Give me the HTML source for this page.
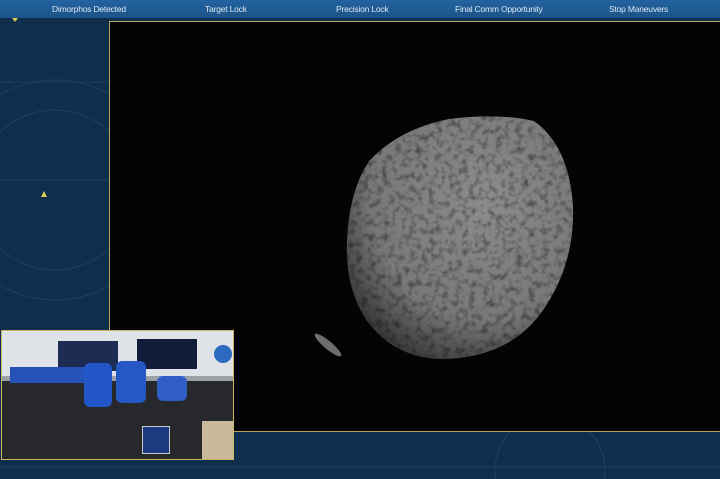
<!DOCTYPE html>
<html><head><style>
*{margin:0;padding:0;box-sizing:border-box}
html,body{width:720px;height:479px;overflow:hidden}
body{background:#0f2e4e;font-family:"Liberation Sans",sans-serif;position:relative}
.top{position:absolute;left:0;top:0;width:720px;height:18px;background:linear-gradient(#2363a0,#1b5388);color:#dfe8f2;font-size:8.5px}
.top span{position:absolute;top:4px;letter-spacing:-0.2px}
.frame{position:absolute;left:109px;top:21px;width:611px;height:411px;border:1.5px solid #b8a45a;border-right:none;background:#040404;overflow:hidden}
.inset{position:absolute;left:1px;top:330px;width:233px;height:130px;border:1.5px solid #c9b766;background:#9aa0a8;overflow:hidden}
.tri{position:absolute;width:0;height:0}
</style></head><body>
<div class="top">
<span style="left:52px">Dimorphos Detected</span>
<span style="left:205px">Target Lock</span>
<span style="left:336px">Precision Lock</span>
<span style="left:455px">Final Comm Opportunity</span>
<span style="left:609px">Stop Maneuvers</span>
</div>
<svg style="position:absolute;left:0;top:0" width="720" height="479">
<g fill="none" stroke="#1d3f62" stroke-width="1">
<circle cx="55" cy="190" r="110"/><circle cx="55" cy="190" r="80"/>
<circle cx="550" cy="470" r="55"/>
</g>
<line x1="0" y1="82" x2="109" y2="82" stroke="#1d3f62"/>
<line x1="0" y1="180" x2="109" y2="180" stroke="#1d3f62"/>
<line x1="0" y1="467" x2="720" y2="467" stroke="#1f4062"/>
</svg>
<div class="tri" style="left:12px;top:18px;border-left:3px solid transparent;border-right:3px solid transparent;border-top:4px solid #d8cc55"></div>
<div class="tri" style="left:41px;top:191px;border-left:3px solid transparent;border-right:3px solid transparent;border-bottom:6px solid #d8cc55"></div>
<div class="frame">
<svg width="620" height="411" style="position:absolute;left:-1px;top:-1px">
<defs>
<filter id="t" x="-10%" y="-10%" width="120%" height="120%">
<feTurbulence type="fractalNoise" baseFrequency="0.15" numOctaves="2" seed="4"/>
<feColorMatrix type="matrix" values="0 0 0 0 0  0 0 0 0 0  0 0 0 0 0  0 0 0 -2 1.1"/>
<feComposite in2="SourceGraphic" operator="in"/>
</filter>
<radialGradient id="g" cx="0.6" cy="0.35" r="0.7">
<stop offset="0" stop-color="#8c8d8b"/><stop offset="0.7" stop-color="#787977"/><stop offset="1" stop-color="#3a3b3a"/>
</radialGradient>
</defs>
<path id="a" d="M260 140 Q290 108 340 98 Q390 92 425 100 Q460 125 464 185 Q466 245 432 292 Q398 338 330 338 Q285 336 258 300 Q236 268 238 220 Q240 170 260 140Z" fill="url(#g)"/>
<use href="#a" fill="#1c1c1c" filter="url(#t)" opacity="0.5"/>
<ellipse cx="219" cy="324" rx="17" ry="4" transform="rotate(40 219 324)" fill="#8a8a88" opacity="0.8"/>
</svg>
</div>
<div class="inset">
<div style="position:absolute;left:0;top:0;width:233px;height:45px;background:#dfe2e6"></div>
<div style="position:absolute;left:135px;top:8px;width:60px;height:30px;background:#101c3a"></div>
<div style="position:absolute;left:56px;top:10px;width:60px;height:30px;background:#1d2c52"></div>
<div style="position:absolute;left:212px;top:14px;width:18px;height:18px;border-radius:50%;background:#2c6ac0"></div>
<div style="position:absolute;left:0;top:50px;width:233px;height:80px;background:#26282c"></div>
<div style="position:absolute;left:8px;top:36px;width:80px;height:16px;background:#2452b8"></div>
<div style="position:absolute;left:82px;top:32px;width:28px;height:44px;background:#2356c8;border-radius:6px"></div>
<div style="position:absolute;left:114px;top:30px;width:30px;height:42px;background:#2558c4;border-radius:6px"></div>
<div style="position:absolute;left:155px;top:45px;width:30px;height:25px;background:#2e5ec6;border-radius:6px"></div>
<div style="position:absolute;left:140px;top:95px;width:28px;height:28px;background:#1b3b80;border:1px solid #ccc"></div>
<div style="position:absolute;left:200px;top:90px;width:33px;height:40px;background:#c9b89a"></div>
</div>
</body></html>
